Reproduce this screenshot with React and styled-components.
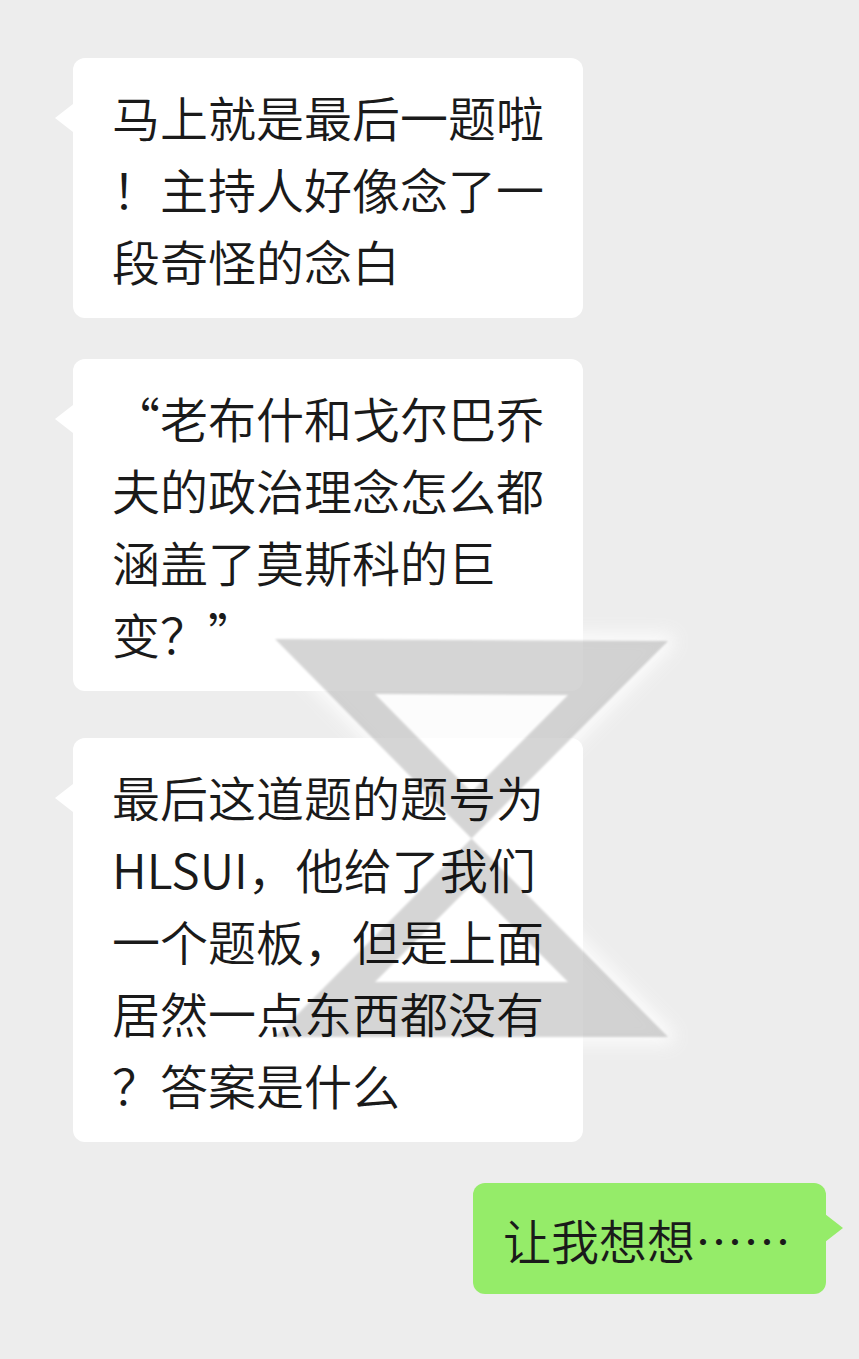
import React from "react";
import styled, { createGlobalStyle, css } from "styled-components";

const GlobalStyle = createGlobalStyle`
  html, body {
    margin: 0;
    padding: 0;
    background: #ededed;
  }
  body {
    font-family: "Noto Sans CJK SC", "Noto Sans", sans-serif;
  }
`;

const Page = styled.div`
  position: relative;
  width: 859px;
  min-height: 1359px;
  box-sizing: border-box;
  padding-top: 58px;
  display: flex;
  flex-direction: column;
  background: #ededed;
`;

const Row = styled.div`
  position: relative;
  z-index: 1;
  display: flex;
  justify-content: ${(p) => (p.$mine ? "flex-end" : "flex-start")};
  padding: 0 33px 0 73px;
  margin-top: ${(p) => p.$gap || 0}px;
`;

const Bubble = styled.div`
  position: relative;
  border-radius: 12px;
  font-size: 48px;
  font-weight: 350;
  line-height: 72px;
  color: #1a1a1a;
  background: ${(p) => (p.$mine ? "#95ec69" : "#ffffff")};
  padding: ${(p) => (p.$mine ? "20px 35px 19px 30px" : "22px 39px")};

  &::before {
    content: "";
    position: absolute;
    width: 18px;
    height: 28px;
    background: inherit;
    ${(p) =>
      p.$mine
        ? css`
            right: -17px;
            top: 31px;
            clip-path: polygon(0 0, 100% 50%, 0 100%);
          `
        : css`
            left: -18px;
            top: 46px;
            clip-path: polygon(100% 0, 0 50%, 100% 100%);
          `}
  }
`;

const Line = styled.span`
  display: block;
  white-space: nowrap;
`;

const Mark = styled.svg`
  position: absolute;
  left: 240px;
  top: 600px;
  width: 460px;
  height: 480px;
  pointer-events: none;
  z-index: ${(p) => (p.$glow ? 0 : 2)};
`;

const OUTER =
  "M275,639 L668,641 L471.5,838.5 Z M471.5,838.5 L668,1037 L275,1037 Z";
const HOLLOW =
  "M375,694 L568,695 L471.5,792 Z M471.5,885 L568,982 L375,982 Z";

const messages = [
  { gap: 0, lines: ["马上就是最后一题啦", "！主持人好像念了一", "段奇怪的念白"] },
  {
    gap: 41,
    lines: ["“老布什和戈尔巴乔", "夫的政治理念怎么都", "涵盖了莫斯科的巨", "变？”"],
  },
  {
    gap: 47,
    lines: [
      "最后这道题的题号为",
      "HLSUI，他给了我们",
      "一个题板，但是上面",
      "居然一点东西都没有",
      "？答案是什么",
    ],
  },
  { gap: 41, mine: true, lines: ["让我想想……"] },
];

export default function App() {
  return (
    <>
      <GlobalStyle />
      <Page>
        <Mark $glow viewBox="240 600 460 480" aria-hidden="true">
          <defs>
            <filter id="glowBlur" x="-20%" y="-20%" width="140%" height="140%">
              <feGaussianBlur stdDeviation="9" />
            </filter>
          </defs>
          <path
            d={OUTER}
            fill="#ffffff"
            stroke="#ffffff"
            strokeWidth="14"
            strokeLinejoin="round"
            opacity="0.85"
            filter="url(#glowBlur)"
          />
        </Mark>
        {messages.map((m, i) => (
          <Row key={i} $mine={m.mine} $gap={m.gap}>
            <Bubble $mine={m.mine}>
              {m.lines.map((l, j) => (
                <Line key={j}>{l}</Line>
              ))}
            </Bubble>
          </Row>
        ))}
        <Mark viewBox="240 600 460 480" aria-hidden="true">
          <defs>
            <filter id="soft" x="-10%" y="-10%" width="120%" height="120%">
              <feGaussianBlur stdDeviation="1.2" />
            </filter>
          </defs>
          <path
            d={`${OUTER} ${HOLLOW}`}
            fillRule="evenodd"
            fill="#000000"
            opacity="0.16"
            filter="url(#soft)"
          />
        </Mark>
      </Page>
    </>
  );
}
